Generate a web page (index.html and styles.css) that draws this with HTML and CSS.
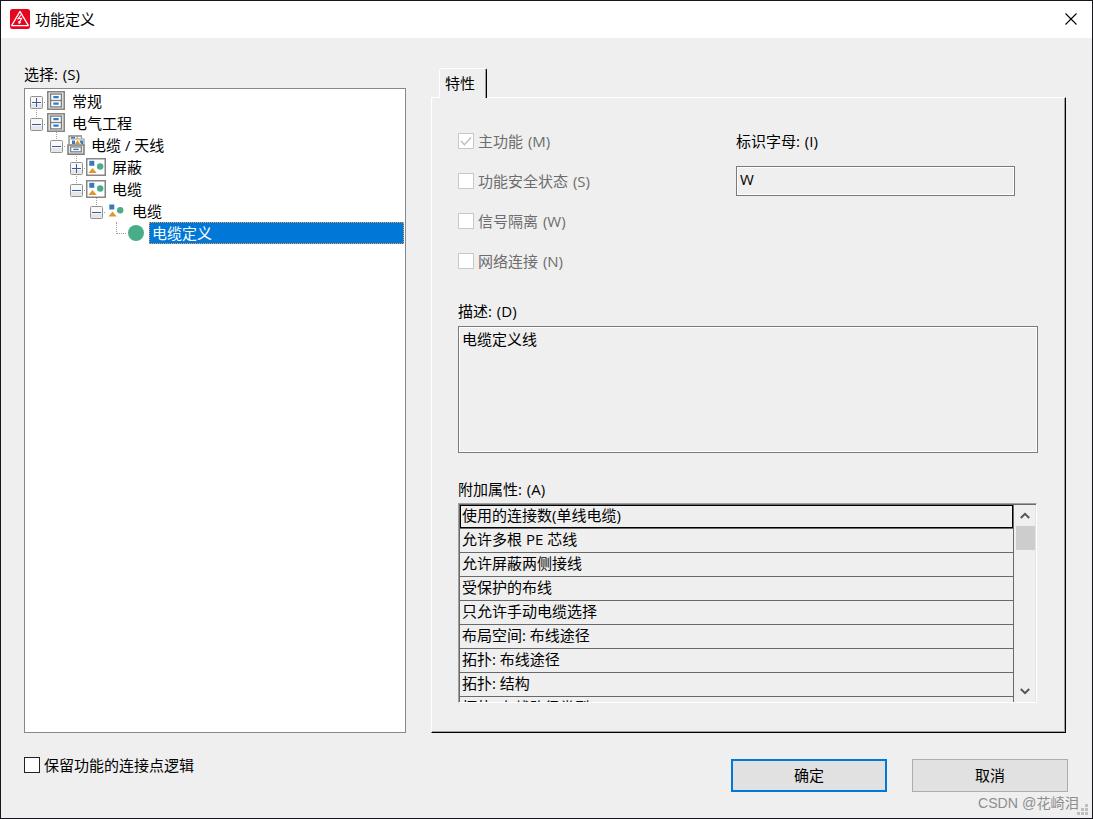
FILE: index.html
```
<!DOCTYPE html>
<html lang="zh-CN">
<head>
<meta charset="utf-8">
<title>功能定义</title>
<link rel="stylesheet" href="styles.css">
</head>
<body>
<svg class="defs" width="0" height="0" aria-hidden="true">
  <symbol id="plus" viewBox="0 0 13 13"><rect x=".5" y=".5" width="12" height="12" rx="1" fill="#f8f8f8" stroke="#919191"/><path d="M1 8h11v4H1z" fill="#e6e6e6"/><path d="M2 6.5h9M6.5 2v9" stroke="#3b57a0"/></symbol>
  <symbol id="minus" viewBox="0 0 13 13"><rect x=".5" y=".5" width="12" height="12" rx="1" fill="#f8f8f8" stroke="#919191"/><path d="M1 8h11v4H1z" fill="#e6e6e6"/><path d="M2 6.5h9" stroke="#3b57a0"/></symbol>
  <symbol id="cabinet" viewBox="0 0 18 19"><rect x=".75" y=".75" width="16.5" height="17.5" fill="#e4e4e4" stroke="#858585" stroke-width="1.5"/><rect x="3.6" y="3.1" width="10.8" height="12.8" fill="#fff" stroke="#7c7c7c" stroke-width="1.3"/><path d="M3 9.5h12" stroke="#7c7c7c" stroke-width="1.3"/><path d="M6.3 6.2h5.4M6.3 12.7h5.4" stroke="#2f7dc6" stroke-width="2.2"/></symbol>
  <symbol id="drawer" viewBox="0 0 18 20"><path d="M2 9V1h13" fill="none" stroke="#858585" stroke-width="1.3"/><path d="M14.5 1v3M3.5 4H17v6" fill="none" stroke="#999" stroke-width="1.2"/><path d="M4 2h4v1.4H4zM5 5.5h3V9H5z" fill="#3d78b8"/><path d="M8 9l2.5-4L13 9zM9 3.4l1.3-1.6 1.3 1.6z" fill="#e0962a"/><path d="M12.5 5.5H16V9h-2z" fill="#3d78b8"/><path d="M1 19.2V10h16v9.2z" fill="#e4e4e4" stroke="#7c7c7c" stroke-width="1.5"/><rect x="3.7" y="12" width="10.6" height="4.8" fill="#fff" stroke="#7c7c7c" stroke-width="1.2"/><path d="M6.3 14.4h5.4" stroke="#2f7dc6" stroke-width="1.4"/></symbol>
  <symbol id="shapes" viewBox="0 0 20 18"><path d="M3.3 2.5h5v5h-5z" fill="#3d78b8"/><path d="M2.5 14.5l4-5 4.2 5z" fill="#e0962a"/><circle cx="14.2" cy="8.3" r="3.2" fill="#49ad88"/></symbol>
  <symbol id="framed" viewBox="0 0 20 18"><rect x=".75" y=".75" width="18.5" height="16.5" fill="#fff" stroke="#858585" stroke-width="1.5"/><path d="M3.3 2.8h5v5h-5z" fill="#3d78b8"/><path d="M2.5 15l4-5 4.2 5z" fill="#e0962a"/><circle cx="14.2" cy="8.5" r="3.2" fill="#49ad88"/></symbol>
</svg>

<div class="window">
  <header class="titlebar">
    <svg class="logo" viewBox="0 0 20 20"><rect width="20" height="20" rx="2.5" fill="#e5061f"/><path d="M10 2.4L18.4 16.6H1.6z" fill="none" stroke="#fff" stroke-width="1.2" stroke-linejoin="round"/><path d="M11.2 5.5L8 9.8l3.7-.6-2.4 4.3" fill="none" stroke="#fff" stroke-width="1.1"/><path d="M8.1 12l.8 3.6 2.4-2.7" fill="#fff"/></svg>
    <h1 class="title">功能定义</h1>
    <svg class="close" viewBox="0 0 12 12"><path d="M.5.5l11 11M11.5.5l-11 11" stroke="#000" stroke-width="1.1"/></svg>
  </header>

  <main class="content">
    <section class="selection">
      <div class="label">选择: (S)</div>
      <div class="tree">
        <div class="node level-0"><svg class="toggle"><use href="#plus"/></svg><span class="link"></span><svg class="icon cabinet"><use href="#cabinet"/></svg><span class="name">常规</span></div>
        <div class="node level-0 stem"><svg class="toggle"><use href="#minus"/></svg><span class="link"></span><svg class="icon cabinet"><use href="#cabinet"/></svg><span class="name">电气工程</span></div>
        <div class="node level-1 stem"><svg class="toggle"><use href="#minus"/></svg><span class="link"></span><svg class="icon drawer"><use href="#drawer"/></svg><span class="name">电缆 / 天线</span></div>
        <div class="node level-2 stem"><svg class="toggle"><use href="#plus"/></svg><span class="link"></span><svg class="icon shapes"><use href="#framed"/></svg><span class="name">屏蔽</span></div>
        <div class="node level-2 stem"><svg class="toggle"><use href="#minus"/></svg><span class="link"></span><svg class="icon shapes"><use href="#framed"/></svg><span class="name">电缆</span></div>
        <div class="node level-3 stem"><svg class="toggle"><use href="#minus"/></svg><span class="link"></span><svg class="icon shapes"><use href="#shapes"/></svg><span class="name">电缆</span></div>
        <div class="node level-4"><span class="elbow"></span><span class="dot"></span><span class="name selected">电缆定义</span></div>
      </div>
    </section>

    <section class="properties">
      <div class="tab">特性</div>
      <div class="panel">
        <div class="options">
          <div class="checks">
            <div class="check disabled"><span class="box"><svg viewBox="0 0 14 14"><path d="M2 7l3.5 3.7L12 3.5" fill="none" stroke="#bfbfbf" stroke-width="1.5"/></svg></span>主功能 (M)</div>
            <div class="check disabled"><span class="box"></span>功能安全状态 (S)</div>
            <div class="check disabled"><span class="box"></span>信号隔离 (W)</div>
            <div class="check disabled"><span class="box"></span>网络连接 (N)</div>
          </div>
          <div class="letter">
            <div class="label">标识字母: (I)</div>
            <div class="field">W</div>
          </div>
        </div>
        <div class="label">描述: (D)</div>
        <div class="field description">电缆定义线</div>
        <div class="label attributes-label">附加属性: (A)</div>
        <div class="list">
          <div class="rows">
            <div class="row current">使用的连接数(单线电缆)</div>
            <div class="row">允许多根 PE 芯线</div>
            <div class="row">允许屏蔽两侧接线</div>
            <div class="row">受保护的布线</div>
            <div class="row">只允许手动电缆选择</div>
            <div class="row">布局空间: 布线途径</div>
            <div class="row">拓扑: 布线途径</div>
            <div class="row">拓扑: 结构</div>
            <div class="row">拓扑: 布线路径类型</div>
          </div>
          <div class="scrollbar">
            <svg class="arrow" viewBox="0 0 10 8"><path d="M.8 6L5 1.8 9.2 6" fill="none" stroke="#555" stroke-width="2"/></svg>
            <div class="thumb"></div>
            <svg class="arrow down" viewBox="0 0 10 8"><path d="M.8 2L5 6.2 9.2 2" fill="none" stroke="#555" stroke-width="2"/></svg>
          </div>
        </div>
      </div>
    </section>
  </main>

  <footer class="footer">
    <div class="check"><span class="box"></span>保留功能的连接点逻辑</div>
    <div class="buttons">
      <button class="button primary">确定</button>
      <button class="button">取消</button>
    </div>
  </footer>

  <div class="watermark">CSDN @花崎泪</div>
  <svg class="grip" viewBox="0 0 11 11"><path d="M8 0h3v3H8zM4 4h3v3H4zM8 4h3v3H8zM0 8h3v3H0zM4 8h3v3H4zM8 8h3v3H8z" fill="#bfbfbf"/></svg>
</div>
</body>
</html>
```
FILE: styles.css
```
* {
  box-sizing: border-box;
}

body {
  margin: 0;
  font: 15px/22px "Open Sans", "Noto Sans CJK SC", sans-serif;
  color: #000;
}

svg {
  display: block;
  flex: none;
}

.defs {
  position: absolute;
}

.window {
  position: relative;
  display: flex;
  flex-direction: column;
  width: 1093px;
  height: 819px;
  overflow: hidden;
  background: #efefef;
  border: 1px solid #16161c;
}

.titlebar {
  display: flex;
  align-items: center;
  height: 37px;
  padding: 0 15px 0 9px;
  background: #fff;
}

.logo {
  width: 20px;
  height: 20px;
  margin-bottom: 1px;
}

.title {
  flex: 1;
  margin: 0 0 2px 5px;
  font-size: 15px;
  font-weight: 400;
}

.close {
  width: 12px;
  height: 12px;
  margin-bottom: 1px;
}

.content {
  display: flex;
  gap: 25px;
  padding: 25px 26px 0 23px;
}

.label {
  height: 22px;
  white-space: nowrap;
  word-spacing: 1px;
}

.selection {
  width: 382px;
}

.selection .label {
  height: 25px;
}

.tree {
  height: 645px;
  padding: 1px 1px 0 5px;
  background: #fff;
  border: 1px solid #828790;
}

.node {
  display: flex;
  align-items: center;
  height: 22px;
}

.level-1 { padding-left: 20px; }
.level-2 { padding-left: 40px; }
.level-3 { padding-left: 60px; }
.level-4 { padding-left: 85px; }

.toggle {
  width: 13px;
  height: 13px;
  margin-top: 2px;
}

.stem {
  height: 24px;
  margin-top: -2px;
  padding-top: 2px;
  background: repeating-linear-gradient(#a0a0a0 0 1px, transparent 1px 2px) no-repeat;
  background-size: 1px 8px;
  background-position: 6px 0;
}

.level-1.stem { background-position: 26px 0; }
.level-2.stem { background-position: 46px 0; }
.level-3.stem { background-position: 66px 0; }

.link {
  width: 3px;
  height: 1px;
  margin-top: 2px;
  border-left: 1px solid transparent;
  background: repeating-linear-gradient(90deg, #a0a0a0 0 1px, transparent 1px 2px);
}

.icon {
  margin: 0 0 0 1px;
}

.cabinet {
  width: 18px;
  height: 19px;
  margin-right: 7px;
  margin-bottom: 1px;
}

.drawer {
  width: 18px;
  height: 20px;
  margin-right: 6px;
}

.shapes {
  width: 20px;
  height: 18px;
  margin-left: 0;
  margin-right: 6px;
}

.name {
  margin-bottom: 1px;
  white-space: nowrap;
}

.elbow {
  width: 10px;
  height: 12px;
  margin: 0 2px 10px 1px;
  border-left: 1px dotted #999;
  border-bottom: 1px dotted #999;
}

.dot {
  width: 16px;
  height: 16px;
  margin-right: 5px;
  border-radius: 50%;
  background: #49ad88;
}

.selected {
  flex: 1;
  height: 22px;
  margin-bottom: 0;
  padding-left: 2px;
  line-height: 20px;
  color: #fff;
  background: #0078d7;
  border: 1px dotted #ff9a45;
}

.properties {
  width: 635px;
  padding-top: 5px;
}

.tab {
  position: relative;
  z-index: 1;
  width: 48px;
  height: 30px;
  margin: 0 0 -1px 8px;
  padding: 3px 0 0 5px;
  background: #efefef;
  border-top: 1px solid #fff;
  border-left: 1px solid #fff;
  border-right: 1px solid #000;
  border-radius: 3px 2px 0 0;
  box-shadow: inset -1px 0 #a0a0a0;
}

.panel {
  height: 636px;
  padding: 32px 26px 0 26px;
  border: 1px solid #fff;
  border-right-color: #000;
  border-bottom-color: #000;
  box-shadow: inset -1px -1px #a0a0a0;
}

.options {
  display: flex;
  height: 170px;
}

.checks {
  display: flex;
  flex-direction: column;
  gap: 18px;
  width: 278px;
}

.check {
  display: flex;
  align-items: center;
  gap: 4px;
  height: 22px;
  white-space: nowrap;
}

.disabled {
  color: #6d6d6d;
  word-spacing: 1px;
}

.box {
  width: 16px;
  height: 16px;
  background: #fff;
  border: 1px solid #222;
}

.disabled .box {
  border-color: #c8c8c8;
}

.letter {
  display: flex;
  flex-direction: column;
  gap: 14px;
}

.field {
  width: 279px;
  height: 30px;
  padding: 1px 3px;
  border: 1px solid #7a7a7a;
  box-shadow: inset 0 0 0 1px #fff;
}

.description {
  width: 580px;
  height: 127px;
  margin: 4px 0 25px;
}

.attributes-label {
  height: 25px;
}

.list {
  display: flex;
  width: 579px;
  height: 200px;
  overflow: hidden;
  border: 1px solid #fff;
  border-top-color: #a0a0a0;
  border-left-color: #a0a0a0;
  box-shadow: inset 1px 1px #696969;
  padding: 1px 0 0 1px;
}

.rows {
  width: 554px;
  height: 197px;
  overflow: hidden;
  border-right: 1px solid #696969;
}

.row {
  height: 24px;
  padding-left: 2px;
  line-height: 20px;
  border-bottom: 1px solid #696969;
}

.current {
  box-shadow: inset 0 0 0 1px #000;
}

.scrollbar {
  display: flex;
  flex: 1;
  flex-direction: column;
  align-items: center;
  padding: 7px 0 0 1px;
  border-right: 1px solid #e3e3e3;
}

.arrow {
  width: 10px;
  height: 8px;
}

.thumb {
  width: 19px;
  height: 24px;
  margin-top: 6px;
  background: #cdcdcd;
}

.down {
  margin-top: 137px;
}

.footer {
  display: flex;
  justify-content: space-between;
  padding: 21px 24px 0 23px;
}

.buttons {
  display: flex;
  gap: 25px;
  padding-top: 5px;
}

.button {
  width: 156px;
  height: 33px;
  padding: 0 0 2px;
  font: inherit;
  background: #e1e1e1;
  border: 1px solid #adadad;
}

.primary {
  border: 2px solid #0078d7;
}

.watermark {
  position: absolute;
  right: 13px;
  bottom: 4px;
  font: 14.2px/22px "Liberation Sans", "Noto Sans CJK SC", sans-serif;
  color: #8e8e8e;
  white-space: nowrap;
}

.grip {
  position: absolute;
  right: 4px;
  bottom: 3px;
  width: 11px;
  height: 11px;
}
```
